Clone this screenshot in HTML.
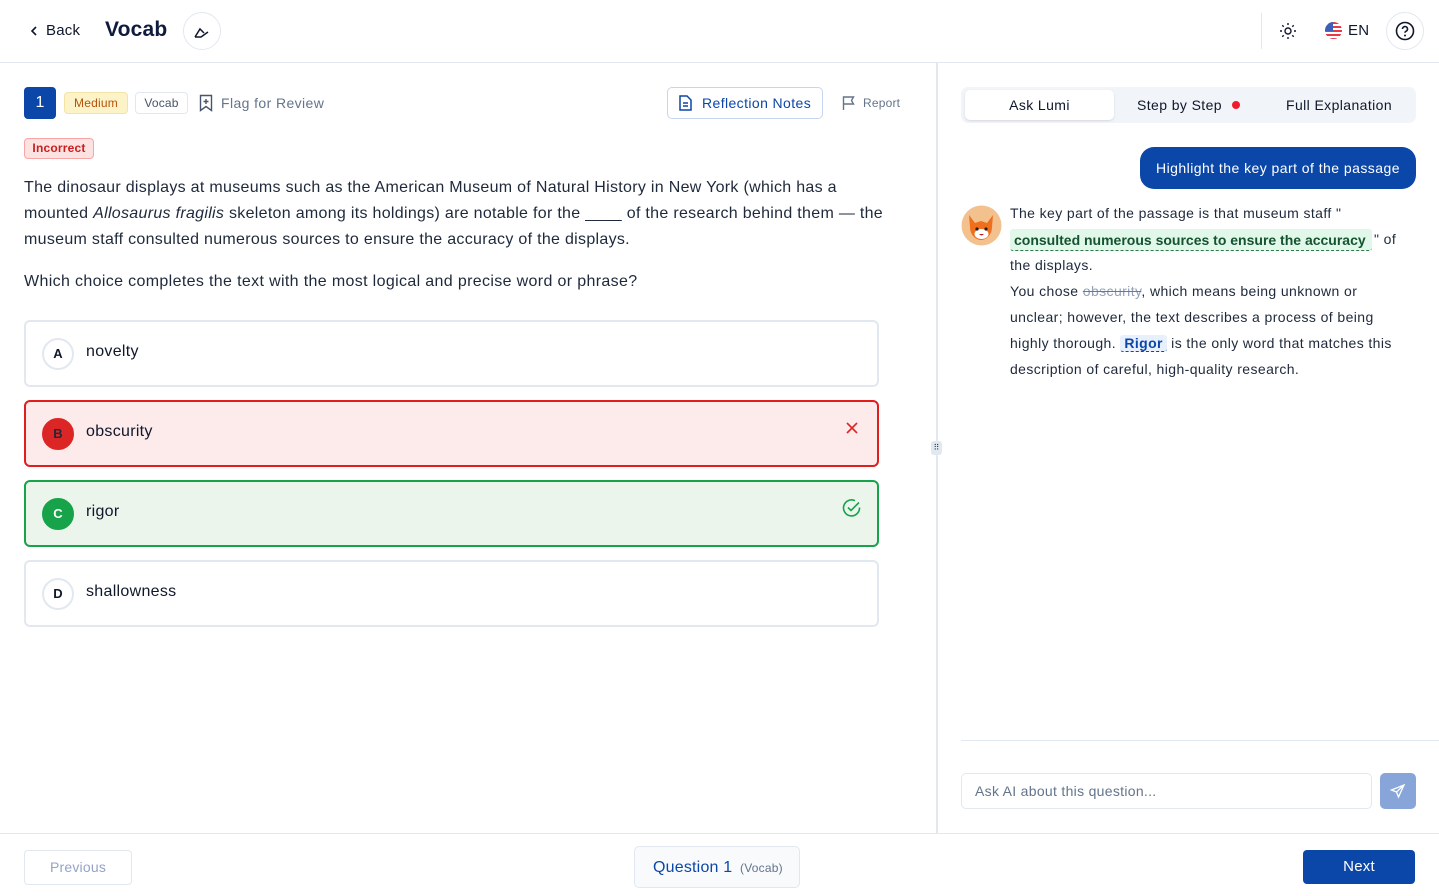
<!DOCTYPE html>
<html><head><meta charset="utf-8"><style>
*{box-sizing:border-box;margin:0;padding:0}
body{width:1439px;height:896px;overflow:hidden;background:#fff;font-family:"Liberation Sans",sans-serif;color:#0f172a;position:relative;letter-spacing:0.2px}
.abs{position:absolute}
.opt{position:absolute;left:24px;width:855px;height:67px;border:2px solid #e2e8f0;border-radius:6px;background:#fff}
.opt .c{position:absolute;left:16px;top:16px;width:32px;height:32px;border-radius:50%;border:2px solid #e2e8f0;font-size:13px;font-weight:bold;text-align:center;line-height:28px;background:#fff;letter-spacing:0}
.opt .t{position:absolute;left:60px;top:21px;font-size:16px;letter-spacing:0.3px}
.rt{position:absolute;left:1010px;font-size:14px;color:#1e293b;line-height:26px;letter-spacing:0.4px;white-space:nowrap}
</style></head><body>
<!-- header -->
<div class="abs" style="left:0;top:62px;width:1439px;height:1px;background:#e2e8f0"></div>
<svg class="abs" style="left:29px;top:25px" width="10" height="12" viewBox="0 0 10 12"><path d="M7 2L3 6l4 4" stroke="#0f172a" stroke-width="1.6" fill="none"/></svg>
<div class="abs" style="left:46px;top:22px;font-size:15px">Back</div>
<div class="abs" style="left:105px;top:18px;font-size:21px;font-weight:bold;color:#0f1b3d">Vocab</div>
<div class="abs" style="left:183px;top:12px;width:38px;height:38px;border:1px solid #e2e8f0;border-radius:50%"></div>
<svg class="abs" style="left:192px;top:21px" width="20" height="20" viewBox="0 0 20 20"><path d="M3 16h6l7-5M3 16l5-8 4 4" stroke="#0f172a" stroke-width="1.5" fill="none"/></svg>
<div class="abs" style="left:1261px;top:13px;width:1px;height:36px;background:#e2e8f0"></div>
<svg class="abs" style="left:1279px;top:22px" width="18" height="18" viewBox="0 0 18 18"><circle cx="9" cy="9" r="3" stroke="#0f172a" stroke-width="1.4" fill="none"/><g stroke="#0f172a" stroke-width="1.4"><path d="M9 1v2M9 15v2M1 9h2M15 9h2M3.3 3.3l1.4 1.4M13.3 13.3l1.4 1.4M3.3 14.7l1.4-1.4M13.3 4.7l1.4-1.4"/></g></svg>
<svg class="abs" style="left:1325px;top:22px" width="17" height="17" viewBox="0 0 17 17"><clipPath id="cp"><circle cx="8.5" cy="8.5" r="8.5"/></clipPath><g clip-path="url(#cp)"><rect width="17" height="17" fill="#fff"/><g fill="#e63946"><rect y="0" width="17" height="2"/><rect y="4" width="17" height="2"/><rect y="8" width="17" height="2"/><rect y="12" width="17" height="2"/><rect y="16" width="17" height="2"/></g><rect width="8" height="9" fill="#3c5fb8"/></g></svg>
<div class="abs" style="left:1348px;top:22px;font-size:15px">EN</div>
<div class="abs" style="left:1386px;top:12px;width:38px;height:38px;border:1px solid #e2e8f0;border-radius:50%"></div>
<svg class="abs" style="left:1395px;top:21px" width="20" height="20" viewBox="0 0 20 20"><circle cx="10" cy="10" r="8.5" stroke="#0f172a" stroke-width="1.6" fill="none"/><path d="M7.5 8a2.5 2.5 0 1 1 3.5 2.3c-.7.3-1 .8-1 1.5" stroke="#0f172a" stroke-width="1.6" fill="none"/><circle cx="10" cy="14.5" r="1" fill="#0f172a"/></svg>
<!-- divider -->
<div class="abs" style="left:936px;top:63px;width:2px;height:770px;background:#e2e8f0"></div>
<div class="abs" style="left:931px;top:441px;width:11px;height:14px;background:#e2e8f0;border-radius:3px;font-size:8px;text-align:center;line-height:14px;color:#334155">⠿</div>
<!-- left meta -->
<div class="abs" style="left:24px;top:87px;width:32px;height:32px;background:#0b47a8;border-radius:4px;color:#fff;font-size:16px;text-align:center;line-height:32px">1</div>
<div class="abs" style="left:64px;top:92px;width:64px;height:22px;background:#fdf3c8;border:1px solid #f3e3a4;border-radius:4px;color:#b45309;font-size:12px;text-align:center;line-height:20px">Medium</div>
<div class="abs" style="left:135px;top:92px;width:53px;height:22px;border:1px solid #e2e8f0;border-radius:4px;color:#475569;font-size:12px;text-align:center;line-height:20px">Vocab</div>
<svg class="abs" style="left:199px;top:94px" width="14" height="18" viewBox="0 0 14 18"><path d="M1.5 1.5h11v15l-5.5-4-5.5 4z" stroke="#475569" stroke-width="1.4" fill="none"/><path d="M7 5v5M4.5 7.5h5" stroke="#475569" stroke-width="1.4"/></svg>
<div class="abs" style="left:221px;top:95px;font-size:14px;color:#64748b;letter-spacing:0.4px">Flag for Review</div>
<div class="abs" style="left:667px;top:87px;width:156px;height:32px;border:1px solid #c7d6f0;border-radius:5px"></div>
<svg class="abs" style="left:679px;top:95px" width="13" height="16" viewBox="0 0 13 16"><path d="M1 1h7l4 4v10H1z" stroke="#0b47a8" stroke-width="1.5" fill="none"/><path d="M4 8h5M4 11h5" stroke="#0b47a8" stroke-width="1.4"/></svg>
<div class="abs" style="left:702px;top:95px;font-size:14px;color:#0b47a8;letter-spacing:0.4px">Reflection Notes</div>
<svg class="abs" style="left:842px;top:95px" width="14" height="16" viewBox="0 0 14 16"><path d="M1.5 15V2h10l-2 3.5 2 3.5h-10" stroke="#64748b" stroke-width="1.4" fill="none"/></svg>
<div class="abs" style="left:863px;top:96px;font-size:12px;color:#64748b">Report</div>
<div class="abs" style="left:24px;top:138px;width:70px;height:21px;background:#fde2e2;border:1px solid #f8a5a5;border-radius:4px;color:#c81e1e;font-size:12px;font-weight:bold;text-align:center;line-height:19px">Incorrect</div>
<div class="abs" style="left:24px;top:175px;width:900px;font-size:16px;line-height:26px;color:#1e293b;letter-spacing:0.3px;white-space:nowrap">The dinosaur displays at museums such as the American Museum of Natural History in New York (which has a<br>mounted <i>Allosaurus fragilis</i> skeleton among its holdings) are notable for the ____ of the research behind them — the<br>museum staff consulted numerous sources to ensure the accuracy of the displays.</div>
<div class="abs" style="left:24px;top:273px;font-size:16px;color:#1e293b;letter-spacing:0.35px">Which choice completes the text with the most logical and precise word or phrase?</div>
<div class="opt" style="top:320px"><div class="c">A</div><div class="t">novelty</div></div>
<div class="opt" style="top:400px;background:#fdeaea;border-color:#e11d1d"><div class="c" style="background:#dc2626;border-color:#dc2626;color:#1e293b">B</div><div class="t">obscurity</div>
<svg class="abs" style="left:819px;top:19px" width="14" height="14" viewBox="0 0 14 14"><path d="M2 2l10 10M12 2L2 12" stroke="#dc2626" stroke-width="1.6"/></svg></div>
<div class="opt" style="top:480px;background:#ebf5ec;border-color:#16a34a"><div class="c" style="background:#16a34a;border-color:#16a34a;color:#fff">C</div><div class="t">rigor</div>
<svg class="abs" style="left:816px;top:16px" width="20" height="20" viewBox="0 0 20 20"><path d="M17.5 9.5A8 8 0 1 1 13 2.7" stroke="#16a34a" stroke-width="1.6" fill="none"/><path d="M6 9.5l3 3 8-8" stroke="#16a34a" stroke-width="1.6" fill="none"/></svg></div>
<div class="opt" style="top:560px"><div class="c">D</div><div class="t">shallowness</div></div>
<!-- right panel -->
<div class="abs" style="left:961px;top:87px;width:455px;height:36px;background:#f1f5f9;border-radius:7px"></div>
<div class="abs" style="left:965px;top:90px;width:149px;height:30px;background:#fff;border-radius:5px;box-shadow:0 1px 2px rgba(0,0,0,.12);text-align:center;line-height:30px;font-size:14px;letter-spacing:0.4px">Ask Lumi</div>
<div class="abs" style="left:1137px;top:97px;font-size:14px;letter-spacing:0.4px">Step by Step</div>
<div class="abs" style="left:1232px;top:101px;width:8px;height:8px;border-radius:50%;background:#ef1c2c"></div>
<div class="abs" style="left:1286px;top:97px;font-size:14px;letter-spacing:0.4px">Full Explanation</div>
<div class="abs" style="left:1140px;top:147px;width:276px;height:42px;background:#0b47a8;border-radius:14px;color:#fff;font-size:14px;text-align:center;line-height:42px;letter-spacing:0.45px">Highlight the key part of the passage</div>
<svg class="abs" style="left:961px;top:205px" width="41" height="41" viewBox="0 0 41 41"><circle cx="20.5" cy="20.5" r="20" fill="#f2c18e"/><path d="M8 10l6 8 6-2 6 2 6-8-1 12c0 8-6 13-11 13S9 30 9 22z" fill="#f06f1c"/><ellipse cx="20.5" cy="29" rx="7" ry="5" fill="#fff"/><circle cx="16" cy="24" r="1.6" fill="#222"/><circle cx="25" cy="24" r="1.6" fill="#222"/><path d="M18 29q2.5 3 5 0" fill="#b3261e"/></svg>
<div class="rt" style="top:200px">The key part of the passage is that museum staff "</div>
<div class="abs" style="left:1010px;top:229px;width:362px;height:22px;background:#e0f7ea;border-bottom:1px dashed #2f7a4a;border-radius:3px;font-size:14px;color:#14532d;font-weight:bold;line-height:22px;padding-left:4px;letter-spacing:0;white-space:nowrap;overflow:hidden">consulted numerous sources to ensure the accuracy</div>
<div class="rt" style="top:226px;left:1374px">" of</div>
<div class="rt" style="top:252px">the displays.</div>
<div class="rt" style="top:278px">You chose <span style="color:#94a3b8;text-decoration:line-through;text-decoration-color:#ef4444">obscurity</span>, which means being unknown or</div>
<div class="rt" style="top:304px">unclear; however, the text describes a process of being</div>
<div class="rt" style="top:330px">highly thorough. <span style="background:#e8f0fd;color:#0b47a8;font-weight:bold;border-bottom:1px dashed #0b47a8;padding:0 4px;border-radius:3px">Rigor</span> is the only word that matches this</div>
<div class="rt" style="top:356px">description of careful, high-quality research.</div>
<div class="abs" style="left:961px;top:740px;width:478px;height:1px;background:#e2e8f0"></div>
<div class="abs" style="left:961px;top:773px;width:411px;height:36px;border:1px solid #e2e8f0;border-radius:5px;font-size:14px;color:#64748b;line-height:34px;padding-left:13px;letter-spacing:0.3px">Ask AI about this question...</div>
<div class="abs" style="left:1380px;top:773px;width:36px;height:36px;background:#88a5da;border-radius:5px"></div>
<svg class="abs" style="left:1390px;top:783px" width="16" height="16" viewBox="0 0 16 16"><path d="M14 2L1.5 7l5 2 2 5z M14 2L6.5 9" stroke="#fff" stroke-width="1.3" fill="none"/></svg>
<!-- footer -->
<div class="abs" style="left:0;top:833px;width:1439px;height:1px;background:#e2e8f0"></div>
<div class="abs" style="left:24px;top:850px;width:108px;height:35px;border:1px solid #e2e8f0;border-radius:4px;color:#94a3c8;font-size:14px;text-align:center;line-height:33px">Previous</div>
<div class="abs" style="left:634px;top:846px;width:166px;height:42px;border:1px solid #e2e8f0;background:#f8fafc;border-radius:5px;line-height:42px;padding-left:18px;font-size:16px;color:#0b47a8">Question 1 <span style="font-size:12px;color:#64748b;margin-left:3px">(Vocab)</span></div>
<div class="abs" style="left:1303px;top:850px;width:112px;height:34px;background:#0b47a8;border-radius:4px;color:#fff;font-size:15px;text-align:center;line-height:34px">Next</div>
</body></html>
